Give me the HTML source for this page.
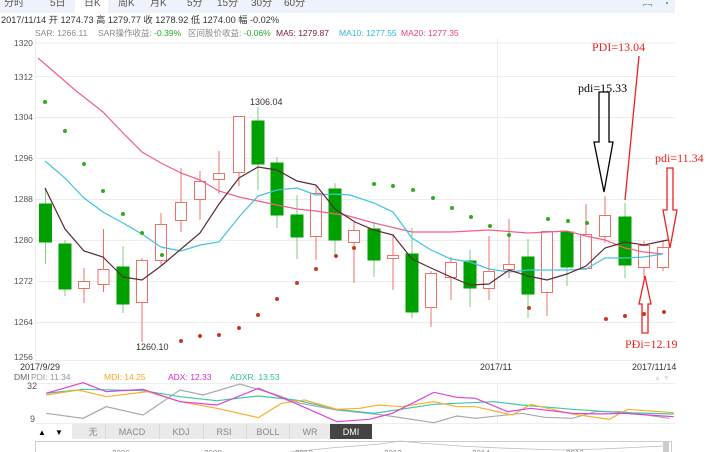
<!DOCTYPE html>
<html><head><meta charset="utf-8"><style>
body{margin:0;width:720px;height:452px;overflow:hidden;background:#fff;font-family:"Liberation Sans","Noto Sans CJK SC",sans-serif}
svg{position:absolute;left:0;top:0}
</style></head><body>
<svg width="720" height="452" viewBox="0 0 720 452" font-family="Liberation Sans, Noto Sans CJK SC, sans-serif">
<rect x="0" y="0" width="675" height="13" fill="#eef3fb"/>
<rect x="75" y="0" width="33" height="13" fill="#fff"/>
<g font-size="10" fill="#555">
<text x="4" y="6">分时</text><text x="50" y="6">5日</text><text x="84" y="6">日K</text><text x="118" y="6">周K</text><text x="150" y="6">月K</text><text x="187" y="6">5分</text><text x="217" y="6">15分</text><text x="251" y="6">30分</text><text x="284" y="6">60分</text>
</g>
<text x="643" y="7" font-size="8" fill="#4a7ec8">⌐¬</text><circle cx="667" cy="3" r="1" fill="#4a7ec8"/>
<text x="1" y="23" font-size="9.2" fill="#333" textLength="278" lengthAdjust="spacingAndGlyphs">2017/11/14 开 1274.73 高 1279.77 收 1278.92 低 1274.00 幅 -0.02%</text>
<g font-size="8.5">
<text x="35" y="36" fill="#888">SAR: 1266.11</text>
<text x="98" y="36" fill="#888">SAR操作收益: <tspan fill="#2a2">-0.39%</tspan></text>
<text x="188" y="36" fill="#888">区间股价收益: <tspan fill="#2a2">-0.06%</tspan></text>
<text x="276" y="36" fill="#7a2030">MA5: 1279.87</text>
<text x="339" y="36" fill="#30b8d8">MA10: 1277.55</text>
<text x="401" y="36" fill="#e8407a">MA20: 1277.35</text>
</g>
<g stroke="#ececec" stroke-width="1">
<line x1="35" y1="43" x2="675" y2="43"/><line x1="35" y1="76.5" x2="675" y2="76.5"/><line x1="35" y1="117.5" x2="675" y2="117.5"/><line x1="35" y1="158.5" x2="675" y2="158.5"/><line x1="35" y1="199.5" x2="675" y2="199.5"/><line x1="35" y1="240.5" x2="675" y2="240.5"/><line x1="35" y1="281.5" x2="675" y2="281.5"/><line x1="35" y1="322.5" x2="675" y2="322.5"/><line x1="35" y1="360.5" x2="675" y2="360.5"/>
<line x1="35.5" y1="38" x2="35.5" y2="361"/><line x1="497.5" y1="38" x2="497.5" y2="361"/>
</g>
<g font-size="8.5" fill="#555">
<text x="14" y="46">1320</text><text x="14" y="80">1312</text><text x="14" y="120">1304</text><text x="14" y="161">1296</text><text x="14" y="202">1288</text><text x="14" y="243">1280</text><text x="14" y="284">1272</text><text x="14" y="325">1264</text><text x="14" y="360">1256</text>
</g>
<g stroke-width="1">
<g stroke="#7fcf7f"><line x1="45.5" y1="188" x2="45.5" y2="264"/><line x1="65" y1="240" x2="65" y2="296"/><line x1="123" y1="246" x2="123" y2="313"/><line x1="258" y1="107" x2="258" y2="190"/><line x1="277" y1="157" x2="277" y2="228"/><line x1="297" y1="195" x2="297" y2="259"/><line x1="335" y1="183" x2="335" y2="255"/><line x1="374" y1="222" x2="374" y2="277"/><line x1="412" y1="228" x2="412" y2="318"/><line x1="470" y1="250" x2="470" y2="307"/><line x1="528" y1="239" x2="528" y2="318"/><line x1="567" y1="231" x2="567" y2="286"/><line x1="625" y1="203" x2="625" y2="278"/></g>
<g fill="#00a000" stroke="#00a000">
<rect x="39.5" y="204" width="12" height="38"/><rect x="59" y="244" width="12" height="45"/><rect x="117" y="267" width="12" height="37"/><rect x="252" y="121" width="12" height="43"/><rect x="271" y="163" width="12" height="52"/><rect x="291" y="215" width="12" height="22"/><rect x="329" y="189" width="12" height="51"/><rect x="368" y="229" width="12" height="31"/><rect x="406" y="254" width="12" height="58"/><rect x="464" y="261" width="12" height="27"/><rect x="522" y="257" width="12" height="37"/><rect x="561" y="232" width="12" height="35"/><rect x="619" y="217" width="12" height="48"/>
</g>
<g stroke="#f07068"><line x1="84" y1="268" x2="84" y2="303"/><line x1="103.5" y1="229" x2="103.5" y2="292"/><line x1="142" y1="258" x2="142" y2="342"/><line x1="161" y1="213" x2="161" y2="265"/><line x1="181" y1="168" x2="181" y2="232"/><line x1="200" y1="171" x2="200" y2="220"/><line x1="219" y1="151" x2="219" y2="194"/><line x1="239" y1="116" x2="239" y2="186"/><line x1="316" y1="186" x2="316" y2="260"/><line x1="354" y1="222" x2="354" y2="283"/><line x1="393" y1="234" x2="393" y2="290"/><line x1="431" y1="271" x2="431" y2="327"/><line x1="451" y1="257" x2="451" y2="300"/><line x1="489" y1="236" x2="489" y2="300"/><line x1="509" y1="219" x2="509" y2="278"/><line x1="547" y1="231" x2="547" y2="316"/><line x1="586" y1="204" x2="586" y2="270"/><line x1="605" y1="196" x2="605" y2="243"/><line x1="644" y1="241" x2="644" y2="278"/><line x1="663" y1="240" x2="663" y2="271"/></g>
<g fill="#fff" stroke="#f07068">
<rect x="78.5" y="281.5" width="11" height="7"/><rect x="98" y="269.5" width="11" height="15"/><rect x="136.5" y="260.5" width="11" height="42"/><rect x="155.5" y="224.5" width="11" height="36"/><rect x="175.5" y="202.5" width="11" height="18"/><rect x="194.5" y="181.5" width="11" height="18"/><rect x="213.5" y="173.5" width="11" height="6"/><rect x="233.5" y="116.5" width="11" height="56"/><rect x="310.5" y="193.5" width="11" height="43"/><rect x="348.5" y="230.5" width="11" height="12"/><rect x="387.5" y="255.5" width="11" height="3"/><rect x="425.5" y="273.5" width="11" height="34"/><rect x="445.5" y="262.5" width="11" height="15"/><rect x="483.5" y="271.5" width="11" height="17"/><rect x="503.5" y="264.5" width="11" height="5"/><rect x="541.5" y="231.5" width="11" height="61"/><rect x="580.5" y="234.5" width="11" height="34"/><rect x="599.5" y="215.5" width="11" height="21"/><rect x="638.5" y="245.5" width="11" height="22"/><rect x="657.5" y="247.5" width="11" height="20"/>
</g>
</g>
<polyline fill="none" stroke="#f0608a" stroke-width="1.2" points="38,58 75,90 103,112 123,133 142,152 161,163 181,173 200,180 219,191 239,197 258,201 277,205 297,209 316,211 335,214 345,215 374,223 412,232 451,232 489,230 528,233 567,231 586,236 605,240 625,248 644,252 663,254"/>
<polyline fill="none" stroke="#40c4e0" stroke-width="1.2" points="45,161 65,178 84,198 103,212 123,223 142,234 161,247 181,251 200,245 219,242 239,217 258,196 277,190 297,188 316,195 335,194 350,195 374,203 393,212 412,238 431,250 451,259 470,262 489,269 509,272 528,270 567,270 586,269 605,258 625,258 644,257 663,254"/>
<polyline fill="none" stroke="#5a2a35" stroke-width="1.2" points="45,188 65,229 84,251 103,257 123,277 142,280 161,266 181,249 200,233 219,204 239,178 258,167 277,170 297,181 316,185 335,209 355,222 374,230 393,235 412,259 431,268 451,277 470,285 489,284 509,270 528,276 547,280 567,274 586,266 605,248 625,242 644,245 663,241 668,240"/>
<g fill="#33aa22"><circle cx="45" cy="102" r="2"/><circle cx="65" cy="131" r="2"/><circle cx="84" cy="164" r="2"/><circle cx="103" cy="191" r="2"/><circle cx="123" cy="214" r="2"/><circle cx="142" cy="233" r="2"/><circle cx="162" cy="255" r="2"/><circle cx="374" cy="184" r="2"/><circle cx="393" cy="186" r="2"/><circle cx="413" cy="190" r="2"/><circle cx="433" cy="198" r="2"/><circle cx="452" cy="208" r="2"/><circle cx="471" cy="217" r="2"/><circle cx="490" cy="226" r="2"/><circle cx="509" cy="235" r="2"/><circle cx="548" cy="219" r="2"/><circle cx="568" cy="221" r="2"/><circle cx="587" cy="223" r="2"/></g>
<g fill="#c83a22"><circle cx="181" cy="341" r="2"/><circle cx="200" cy="336" r="2"/><circle cx="219" cy="335" r="2"/><circle cx="239" cy="328" r="2"/><circle cx="258" cy="315" r="2"/><circle cx="277" cy="299" r="2"/><circle cx="297" cy="283" r="2"/><circle cx="316" cy="269" r="2"/><circle cx="336" cy="256" r="2"/><circle cx="354" cy="248" r="2"/><circle cx="529" cy="308" r="2"/><circle cx="606" cy="319" r="2"/><circle cx="625" cy="316" r="2"/><circle cx="644" cy="314" r="2"/><circle cx="664" cy="312" r="2"/></g>
<g font-size="9" fill="#333"><text x="250" y="105">1306.04</text><text x="136" y="350">1260.10</text></g>
<g font-family="Liberation Serif, serif" font-size="12">
<text x="578" y="92" fill="#000">pdi=15.33</text>
<text x="592" y="51" fill="#ee2222">PDI=13.04</text>
<text x="655" y="162" fill="#ee2222">pdi=11.34</text>
<text x="625" y="348" fill="#ee2222">PĐi=12.19</text>
</g>
<polygon points="599,92 609,92 609,142 613,142 604,192 594,142 599,142" fill="none" stroke="#000" stroke-width="1.3"/>
<line x1="639" y1="56" x2="625" y2="200" stroke="#ee2222" stroke-width="1.3"/>
<polygon points="667,168 673,168 673,210 677,210 670,248 663,210 667,210" fill="none" stroke="#ee2222" stroke-width="1.3"/>
<polygon points="642,333 648,333 648,304 651,304 645,276 639,304 642,304" fill="none" stroke="#ee2222" stroke-width="1.3"/>
<g font-size="9" fill="#333"><text x="20" y="370">2017/9/29</text><text x="480" y="370">2017/11</text><text x="632" y="370">2017/11/14</text></g>
<g font-size="8.5"><text x="14" y="380" fill="#666">DMI</text><text x="31" y="380" fill="#999">PDI: 11.34</text><text x="104" y="380" fill="#f5a623">MDI: 14.25</text><text x="168" y="380" fill="#d030d0">ADX: 12.33</text><text x="230" y="380" fill="#30c090">ADXR: 13.53</text></g>
<text x="654" y="380" font-size="7" fill="#ddd">▲ ▼</text>
<line x1="35" y1="383.5" x2="675" y2="383.5" stroke="#eee"/><line x1="35" y1="423.5" x2="675" y2="423.5" stroke="#eee"/>
<line x1="497.5" y1="383" x2="497.5" y2="423" stroke="#eee"/>
<g font-size="9" fill="#555"><text x="27" y="389">32</text><text x="30" y="422">9</text></g>
<svg x="0" y="360" width="720" height="92" viewBox="0 0 1560 276" preserveAspectRatio="none">
<g fill="none" stroke-width="1.2">
<polyline vector-effect="non-scaling-stroke" stroke="#aaa" points="100,160 180,175 230,140 310,165 390,90 440,105 520,72 600,105 650,130 730,150 830,165 940,188 990,168 1030,175 1130,160 1180,172 1240,175 1290,155 1350,155 1450,175"/>
<polyline vector-effect="non-scaling-stroke" stroke="#40c8a0" points="100,100 180,88 310,92 390,110 470,122 560,108 640,120 730,148 810,160 940,133 1070,125 1130,135 1240,148 1350,158 1460,162"/>
<polyline vector-effect="non-scaling-stroke" stroke="#f8b030" points="100,105 170,90 230,110 320,95 390,125 470,145 560,173 610,130 660,120 730,148 780,145 820,135 870,140 940,125 990,140 1030,140 1110,165 1150,133 1240,162 1320,178 1360,148 1460,158"/>
<polyline vector-effect="non-scaling-stroke" stroke="#e040d8" points="100,100 180,68 230,95 310,88 390,125 470,135 560,85 640,130 730,185 800,178 850,160 940,97 990,112 1030,115 1100,155 1150,145 1240,160 1300,162 1350,160 1460,170"/>
</g></svg>
<rect x="35" y="424" width="35" height="15" fill="#fff"/>
<text x="38" y="435" font-size="8" fill="#000">▲</text><text x="55" y="435" font-size="8" fill="#000">▼</text>
<rect x="72" y="424" width="258" height="15" fill="#eaeaea"/>
<g stroke="#d8d8d8"><line x1="105.5" y1="424" x2="105.5" y2="439"/><line x1="159.5" y1="424" x2="159.5" y2="439"/><line x1="203.5" y1="424" x2="203.5" y2="439"/><line x1="246.5" y1="424" x2="246.5" y2="439"/><line x1="289.5" y1="424" x2="289.5" y2="439"/></g>
<rect x="330" y="424" width="42" height="15" fill="#444"/>
<g font-size="9" fill="#888" text-anchor="middle"><text x="93" y="435">无</text><text x="132" y="435">MACD</text><text x="181" y="435">KDJ</text><text x="224" y="435">RSI</text><text x="268" y="435">BOLL</text><text x="310" y="435">WR</text><text x="351" y="435" fill="#fff">DMI</text></g>
<rect x="35.5" y="441.5" width="636" height="12" fill="none" stroke="#ccc"/>
<polyline fill="none" stroke="#bbb" stroke-width="0.8" points="290,452 330,448 380,444 400,441 420,443 460,446 500,448 560,450 600,449 665,446"/>
<rect x="663" y="441" width="6" height="12" fill="#ccc"/>
<g font-size="8" fill="#888"><text x="112" y="456">2006</text><text x="204" y="456">2008</text><text x="295" y="456">2010</text><text x="384" y="456">2012</text><text x="472" y="456">2014</text><text x="566" y="456">2016</text></g>
</svg>
</body></html>
